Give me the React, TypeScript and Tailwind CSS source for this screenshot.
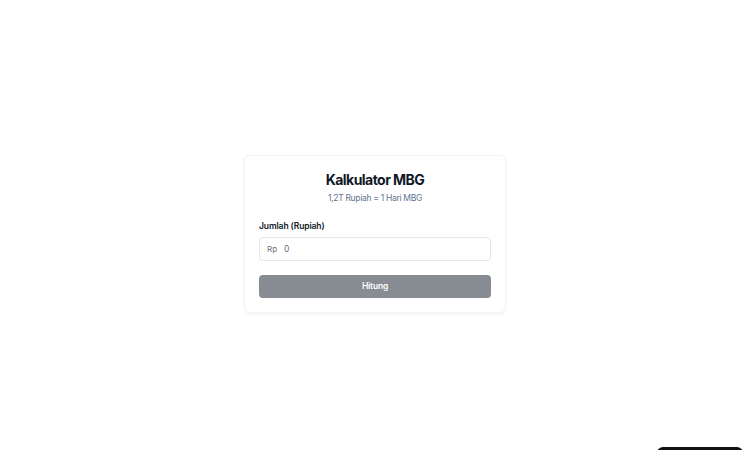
export default function App() {
  return (
    <div
      className="relative h-[450px] w-full overflow-hidden bg-white"
      style={{ fontFamily: "Inter, 'Liberation Sans', sans-serif" }}
    >
      <div className="flex h-full items-center justify-center pt-[18px]">
        <div className="w-[262px] rounded-md border border-gray-100 bg-white px-[14px] pt-[15px] pb-[14px] shadow-[0_1px_3px_rgba(0,0,0,0.06)]">
          <h1 className="text-center text-[14px] leading-[18px] font-bold tracking-[-0.55px] text-gray-900">
            Kalkulator MBG
          </h1>
          <p className="mt-[3px] text-center text-[8.5px] leading-[12px] tracking-[-0.3px] text-slate-500">
            1,2T Rupiah = 1 Hari MBG
          </p>

          <label className="mt-[16px] block text-[8.5px] leading-[12px] font-semibold tracking-[-0.1px] text-gray-900">
            Jumlah (Rupiah)
          </label>
          <div className="mt-[5px] flex h-[24px] items-center rounded-[4px] border border-gray-200 px-[7px]">
            <span className="text-[8px] text-gray-500">Rp</span>
            <span className="ml-[7px] text-[8.5px] text-gray-500">0</span>
          </div>

          <button className="mt-[14px] flex h-[23px] w-full items-center justify-center rounded-[4px] bg-[#878b92] text-[8.5px] font-semibold tracking-[-0.2px] text-white">
            Hitung
          </button>
        </div>
      </div>

      {/* toast peeking in from the bottom edge */}
      <div className="absolute bottom-[-30px] left-[657px] h-[33px] w-[86px] rounded-md bg-[#111]" />
    </div>
  );
}
